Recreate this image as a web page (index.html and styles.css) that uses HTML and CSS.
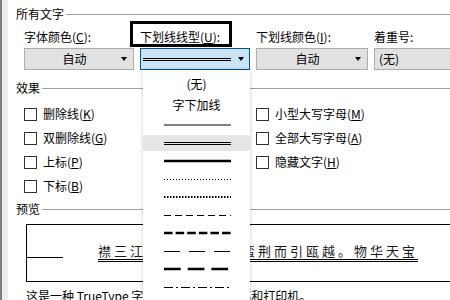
FILE: index.html
```html
<!DOCTYPE html>
<html lang="zh-CN">
<head>
    <meta charset="UTF-8">
    <title>字体 - 下划线线型</title>
    <link rel="stylesheet" href="styles.css">
</head>
<body>
    <div class="dialog">
        <div class="content">
            <div class="group-title">所有文字</div>
            <div class="font-row">
                <div class="field">
                    <div class="label">字体颜色(<u>C</u>):</div>
                    <div class="combo"><span class="combo-text">自动</span><i class="arrow"></i></div>
                </div>
                <div class="field">
                    <div class="label marked">下划线线型(<u>U</u>):</div>
                    <div class="combo active">
                        <span class="combo-line"></span><i class="arrow"></i>
                    </div>
                </div>
                <div class="field">
                    <div class="label">下划线颜色(<u>I</u>):</div>
                    <div class="combo"><span class="combo-text">自动</span><i class="arrow"></i></div>
                </div>
                <div class="field">
                    <div class="label">着重号:</div>
                    <div class="combo plain"><span>(无)</span></div>
                </div>
            </div>

            <div class="group-title spaced">效果</div>
            <div class="effects">
                <div class="effects-col">
                    <div class="check"><span class="box"></span>删除线(<u>K</u>)</div>
                    <div class="check"><span class="box"></span>双删除线(<u>G</u>)</div>
                    <div class="check"><span class="box"></span>上标(<u>P</u>)</div>
                    <div class="check"><span class="box"></span>下标(<u>B</u>)</div>
                </div>
                <div class="effects-col">
                    <div class="check"><span class="box"></span>小型大写字母(<u>M</u>)</div>
                    <div class="check"><span class="box"></span>全部大写字母(<u>A</u>)</div>
                    <div class="check"><span class="box"></span>隐藏文字(<u>H</u>)</div>
                </div>
            </div>

            <div class="group-title tight">预览</div>
            <div class="preview">
                <span class="preview-rule"></span>
                <span class="preview-text">襟三江而带五湖，控蛮荆而引瓯越。物华天宝</span>
            </div>
            <p class="note">这是一种 TrueType 字体，同时适用于屏幕和打印机。</p>
        </div>

        <!-- open list of the underline styles -->
        <div class="dropdown">
            <div class="item text-item first">(无)</div>
            <div class="item text-item">字下加线</div>
            <div class="item line-item">
                <svg width="67" height="4"><line x1="0" y1="2" x2="67" y2="2" stroke="#000" stroke-width="1"/></svg>
            </div>
            <div class="item line-item selected">
                <svg width="67" height="4"><line x1="0" y1="1.5" x2="67" y2="1.5" stroke="#000" stroke-width="1"/><line x1="0" y1="3.5" x2="67" y2="3.5" stroke="#000" stroke-width="1"/></svg>
            </div>
            <div class="item line-item">
                <svg width="67" height="4"><line x1="0" y1="2" x2="67" y2="2" stroke="#000" stroke-width="2.5"/></svg>
            </div>
            <div class="item line-item">
                <svg width="67" height="4"><line x1="0" y1="2.5" x2="67" y2="2.5" stroke="#000" stroke-width="1" stroke-dasharray="1 2"/></svg>
            </div>
            <div class="item line-item">
                <svg width="67" height="4"><line x1="0" y1="2" x2="67" y2="2" stroke="#000" stroke-width="2" stroke-dasharray="1.5 1.5"/></svg>
            </div>
            <div class="item line-item">
                <svg width="67" height="4"><line x1="0" y1="2.5" x2="67" y2="2.5" stroke="#000" stroke-width="1" stroke-dasharray="7 4"/></svg>
            </div>
            <div class="item line-item">
                <svg width="67" height="4"><line x1="0" y1="2" x2="67" y2="2" stroke="#000" stroke-width="2.5" stroke-dasharray="8.6 3"/></svg>
            </div>
            <div class="item line-item">
                <svg width="67" height="4"><line x1="0" y1="2.5" x2="67" y2="2.5" stroke="#000" stroke-width="1" stroke-dasharray="16 9"/></svg>
            </div>
            <div class="item line-item">
                <svg width="67" height="4"><line x1="0" y1="2" x2="67" y2="2" stroke="#000" stroke-width="2.5" stroke-dasharray="16.7 7"/></svg>
            </div>
            <div class="item line-item">
                <svg width="67" height="4"><line x1="0" y1="2.5" x2="67" y2="2.5" stroke="#000" stroke-width="1" stroke-dasharray="9 3 2 3"/></svg>
            </div>
        </div>
    </div>
</body>
</html>
```

FILE: styles.css
```css
html, body {
    margin: 0;
    padding: 0;
    height: 300px;
    overflow: hidden;
    background-color: #fff;
}

body {
    font-family: "Noto Sans CJK SC", "Noto Sans", sans-serif;
    font-size: 12px;
    line-height: 16px;
    color: #000;
}

.dialog {
    position: relative;
    height: 300px;
    border-left: 2px solid #7d7d7d;
    box-shadow: inset 6px 0 0 #ececec;
}

.content {
    padding: 6px 0 0 14px;
}

u {
    text-decoration: underline;
    text-underline-offset: 1px;
}

.group-title {
    display: flex;
    align-items: center;
    gap: 2px;
}

.group-title::after {
    content: "";
    flex: 1;
    border-top: 1px solid #a0a0a0;
    margin-top: 1px;
}

.group-title.spaced {
    margin-top: 10px;
}

.group-title.tight {
    margin-top: 3px;
}

.font-row {
    display: grid;
    grid-template-columns: 110px 110px 112px 100px;
    column-gap: 6px;
    margin: 7px 0 0 8px;
}

.label {
    height: 16px;
    white-space: nowrap;
}

.label.marked {
    position: relative;
}

/* black frame drawn around this label */
.label.marked::after {
    content: "";
    position: absolute;
    left: -10px;
    top: -8px;
    width: 96px;
    height: 20px;
    border: 3px solid #000;
}

.combo {
    display: flex;
    align-items: center;
    height: 20px;
    margin-top: 3px;
    background-color: #e1e1e1;
    border: 1px solid #adadad;
    position: relative;
}

.combo-text {
    flex: 1;
    text-align: center;
    padding-right: 18px;
    padding-left: 9px;
}

.combo.plain span {
    padding-left: 4px;
}

.combo.active {
    background-color: #cce4f7;
    border-color: #005499;
}

.combo-line {
    width: 88px;
    height: 1px;
    margin-left: 2px;
    border-top: 1px solid #000;
    border-bottom: 1px solid #000;
}

.arrow {
    position: absolute;
    right: 6px;
    top: 8px;
    width: 0;
    height: 0;
    border-left: 3.5px solid transparent;
    border-right: 3.5px solid transparent;
    border-top: 4px solid #000;
}

.combo.active .arrow {
    right: 5px;
}

.effects {
    display: grid;
    grid-template-columns: 232px 1fr;
    margin: 6px 0 0 8px;
}

.check {
    display: flex;
    align-items: center;
    height: 24px;
    white-space: nowrap;
}

.box {
    width: 11px;
    height: 11px;
    border: 1px solid #333;
    background-color: #fff;
    margin-right: 6px;
}

.preview {
    display: flex;
    align-items: flex-start;
    margin: 7px 0 0 10px;
    height: 56px;
    border: 1px solid #000;
    border-right: none;
}

.preview-rule {
    width: 36px;
    margin-top: 32px;
    border-top: 1px solid #000;
}

.preview-text {
    margin: 19px 0 0 35px;
    font-size: 13px;
    line-height: 14px;
    letter-spacing: 3px;
    white-space: nowrap;
    color: #1a1a1a;
    padding-bottom: 1px;
    border-bottom: 3px double #000;
}

.note {
    margin: 6px 0 0 10px;
    white-space: nowrap;
}

.dropdown {
    position: absolute;
    left: 141px;
    top: 70px;
    width: 107px;
    height: 240px;
    padding-top: 3px;
    background-color: #fff;
    box-shadow: 0 0 4px rgba(0, 0, 0, 0.22);
}

.item {
    display: flex;
    justify-content: center;
    align-items: center;
}

.text-item {
    height: 21px;
}

.text-item + .text-item {
    height: 22px;
}

.line-item {
    height: 18px;
}

.line-item svg {
    display: block;
    margin-left: 2px;
}

.line-item.selected {
    height: 16px;
    margin: 1px 0;
    background-color: #e5e5e5;
    border-radius: 2px;
}
```
